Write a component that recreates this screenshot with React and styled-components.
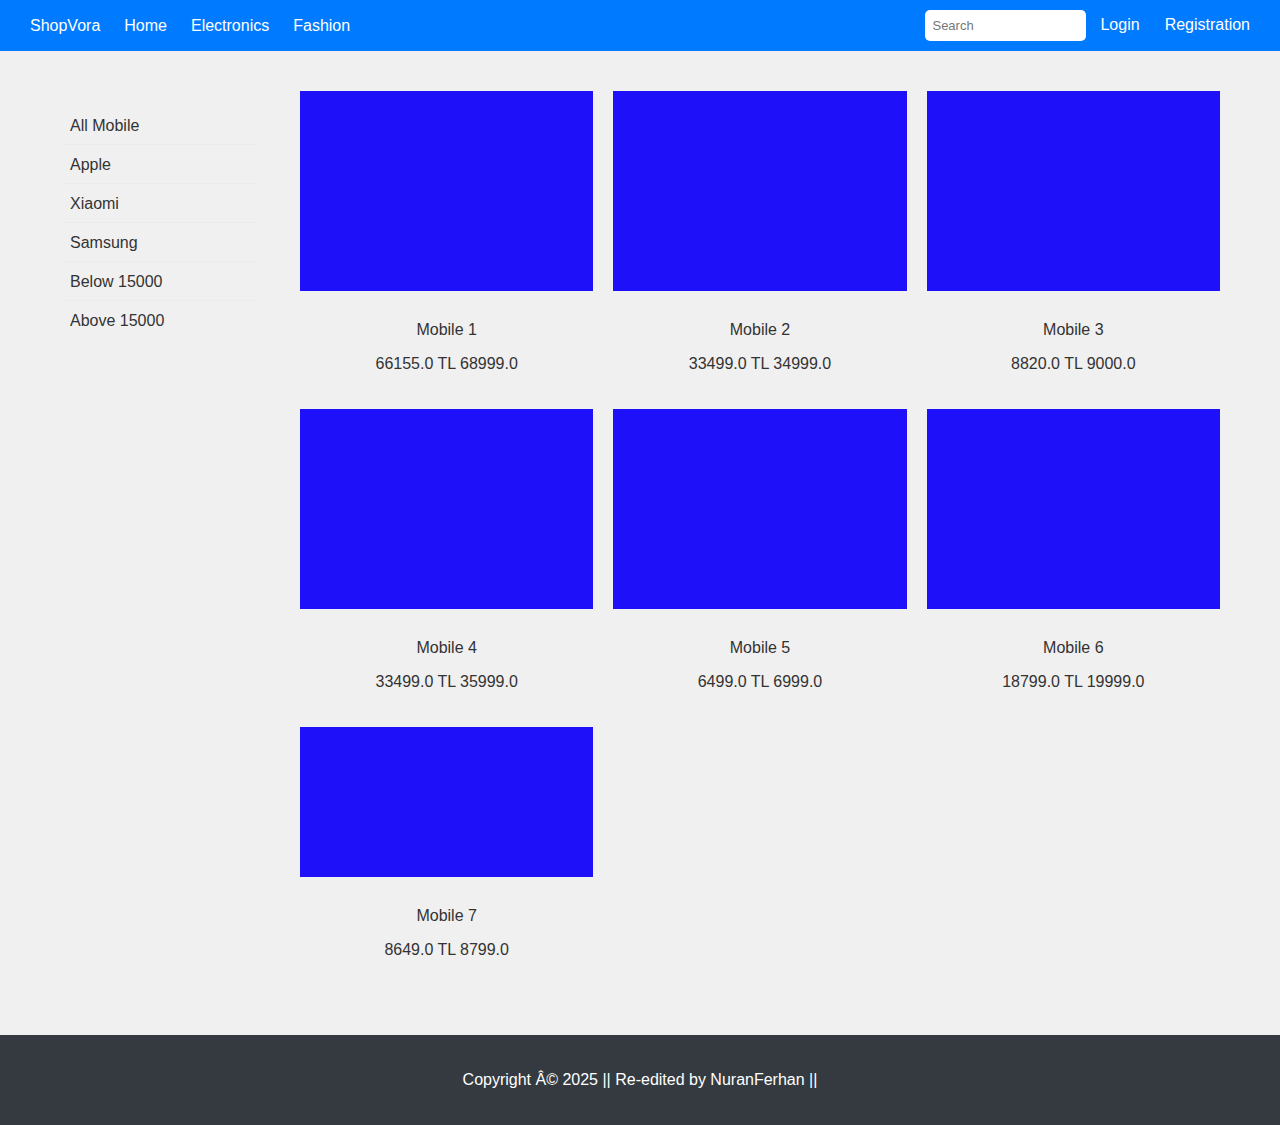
import React from 'react';
import styled, { createGlobalStyle } from 'styled-components';

const Global = createGlobalStyle`
  * { box-sizing: border-box; }
  body {
    margin: 0; background: #f0f0f0; color: #333;
    font-family: "Liberation Sans", Arial, sans-serif; font-size: 16px;
  }
`

const Nav = styled.nav`
  height: 51px; background: #007bff; display: flex; align-items: center;
  justify-content: space-between; padding: 0 30px;
`
const NavGroup = styled.div`
  display: flex; align-items: center; gap: ${p => p.$gap || 24}px;
`
const NavLink = styled.a`
  color: #fff; text-decoration: none; font-size: 16px; line-height: 20px;
  margin-top: ${p => p.$up ? '-2px' : '0'};
`
const Search = styled.input`
  width: 161px; height: 31px; border: none; border-radius: 5px; padding: 0 7px;
  font-family: inherit; font-size: 13px; color: #333; outline: none; margin-right: -11px;
  &::placeholder { color: #777; }
`

const Main = styled.main`
  display: flex; gap: 40px; padding: 40px 60px 60px;
`
const Sidebar = styled.ul`
  width: 200px; flex-shrink: 0; list-style: none; margin: 0; padding: 15px 0 0;
`
const SideItem = styled.li`
  height: 39px; line-height: 39px; padding-left: 10px; font-size: 16px;
  border-bottom: 1px solid ${p => p.$last ? 'transparent' : '#ececec'};
`
const Grid = styled.div`
  width: 920px; display: grid; grid-template-columns: repeat(3, 1fr);
  column-gap: 20px; row-gap: 20px; align-items: start;
`
const Card = styled.div`
  text-align: center; padding-bottom: 15px;
`
const Thumb = styled.div`
  height: ${p => p.$h}px; background: #1e10f8;
`
const Name = styled.p`
  margin: 29px 0 0; line-height: 20px;
`
const Price = styled.p`
  margin: 14px 0 0; line-height: 20px;
`

const Footer = styled.footer`
  height: 90px; background: #343a40; color: #fff; display: flex;
  align-items: center; justify-content: center; font-size: 16px; padding-bottom: 1px;
`

const categories = ['All Mobile', 'Apple', 'Xiaomi', 'Samsung', 'Below 15000', 'Above 15000'];

const products = [
  { name: 'Mobile 1', price: '66155.0 TL 68999.0', h: 200 },
  { name: 'Mobile 2', price: '33499.0 TL 34999.0', h: 200 },
  { name: 'Mobile 3', price: '8820.0 TL 9000.0', h: 200 },
  { name: 'Mobile 4', price: '33499.0 TL 35999.0', h: 200 },
  { name: 'Mobile 5', price: '6499.0 TL 6999.0', h: 200 },
  { name: 'Mobile 6', price: '18799.0 TL 19999.0', h: 200 },
  { name: 'Mobile 7', price: '8649.0 TL 8799.0', h: 150 },
];

const App = () => {
  return (
    <>
      <Global />
      <Nav>
        <NavGroup>
          <NavLink href="#">ShopVora</NavLink>
          <NavLink href="#">Home</NavLink>
          <NavLink href="#">Electronics</NavLink>
          <NavLink href="#">Fashion</NavLink>
        </NavGroup>
        <NavGroup $gap={25}>
          <Search placeholder="Search" />
          <NavLink href="#" $up>Login</NavLink>
          <NavLink href="#" $up>Registration</NavLink>
        </NavGroup>
      </Nav>
      <Main>
        <Sidebar>
          {categories.map((c, i) => (
            <SideItem key={c} $last={i === categories.length - 1}>{c}</SideItem>
          ))}
        </Sidebar>
        <Grid>
          {products.map(p => (
            <Card key={p.name}>
              <Thumb $h={p.h} />
              <Name>{p.name}</Name>
              <Price>{p.price}</Price>
            </Card>
          ))}
        </Grid>
      </Main>
      <Footer>Copyright Â© 2025 || Re-edited by NuranFerhan ||</Footer>
    </>
  )
}

export default App;
